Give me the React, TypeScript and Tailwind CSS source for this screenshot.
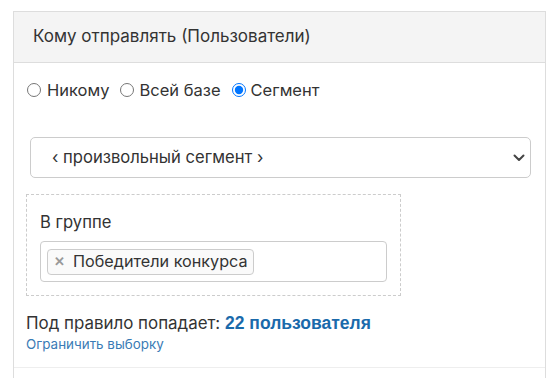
export default function App() {
    return (
        <div className="w-[558px] h-[378px] overflow-hidden bg-white pt-[11px] pl-[13px] pr-[12px] text-[#333] font-['Inter',sans-serif]">
            <div className="border border-b-0 border-[#ddd] h-[400px]">
                {/* Header */}
                <div className="h-[51px] flex items-center px-[19px] bg-[#f4f4f4] border-b border-[#ddd] text-[17px]">
                    Кому отправлять (Пользователи)
                </div>

                {/* Body */}
                <div className="pl-[12px] pr-[10px] pt-[15px]">
                    <div className="flex items-center h-[24px] text-[16.5px]">
                        <label className="flex items-center gap-[6px] ml-[1px]">
                            <input type="radio" name="to" className="m-0 w-[14px] h-[14px]" />
                            Никому
                        </label>
                        <label className="flex items-center gap-[5px] ml-[11px]">
                            <input type="radio" name="to" className="m-0 w-[14px] h-[14px]" />
                            Всей базе
                        </label>
                        <label className="flex items-center gap-[5px] ml-[11px]">
                            <input type="radio" name="to" defaultChecked className="m-0 w-[14px] h-[14px]" />
                            Сегмент
                        </label>
                    </div>

                    <div className="px-[4px] mt-[35px]">
                        <div className="h-[41px] border border-[#ccc] rounded-[5px] flex items-center justify-between pl-[21px] pr-[5px] text-[16.6px]">
                            <span>‹ произвольный сегмент ›</span>
                            <svg width="12" height="8" viewBox="0 0 12 8" fill="none">
                                <path d="M1.5 1.5 6 6l4.5-4.5" stroke="#444" strokeWidth="2" strokeLinecap="round" strokeLinejoin="round" />
                            </svg>
                        </div>
                    </div>

                    {/* Group filter */}
                    <div className="mt-[16px] w-[375px] border border-dashed border-[#ccc] px-[13px] pt-[17px] pb-[13px]">
                        <div className="text-[16.6px] leading-[20px]">В группе</div>
                        <div className="mt-[9px] h-[41px] border border-[#ccc] rounded-[4px] flex items-center px-[6px]">
                            <span className="h-[26px] flex items-center gap-[8px] border border-[#ccc] rounded-[4px] bg-[#fafafa] pl-[6px] pr-[5px] text-[16.2px]">
                                <span className="text-[#999] font-bold text-[13px] leading-none">✕</span>
                                Победители конкурса
                            </span>
                        </div>
                    </div>

                    <div className="mt-[17px] text-[16.9px] leading-[20px]">
                        Под правило попадает:{" "}
                        <span className="font-bold text-[#1a6aab] text-[17.5px] font-['Liberation_Sans',sans-serif]">22 пользователя</span>
                    </div>
                    <div className="mt-[2px] text-[13.4px] leading-[18px] text-[#3a7bb5]">Ограничить выборку</div>
                </div>

                <div className="mt-[14px] border-t border-[#eee]" />
            </div>
        </div>
    );
}
